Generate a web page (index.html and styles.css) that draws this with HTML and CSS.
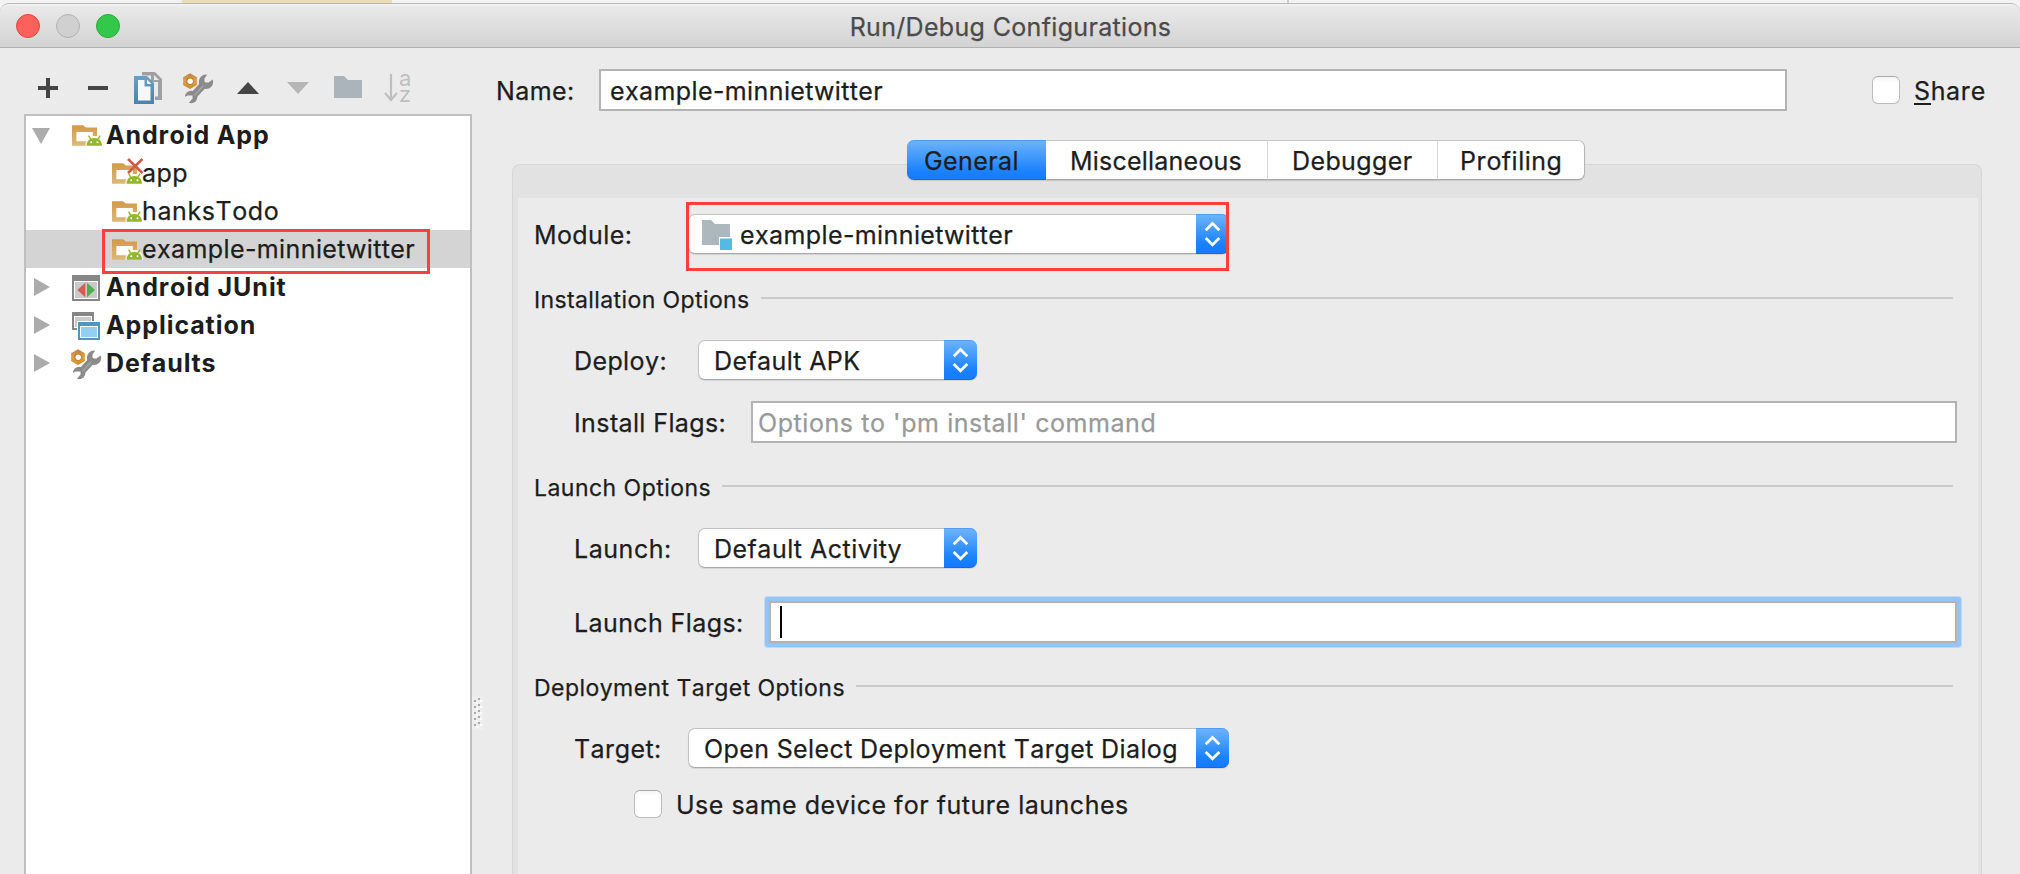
FILE: index.html
```html
<!DOCTYPE html>
<html lang="en">
<head>
<meta charset="utf-8">
<title>Run/Debug Configurations</title>
<link rel="stylesheet" href="styles.css">
</head>
<body>
<svg class="defs" width="0" height="0">
  <defs>
    <linearGradient id="tan" x1="0" y1="0" x2="0" y2="1"><stop offset="0" stop-color="#d39a49"/><stop offset="1" stop-color="#dcb877"/></linearGradient>
    <linearGradient id="steel" x1="0" y1="0" x2="0" y2="1"><stop offset="0" stop-color="#6ba0c0"/><stop offset="1" stop-color="#4a83aa"/></linearGradient>
    <linearGradient id="nut" x1="0" y1="0" x2="0" y2="1"><stop offset="0" stop-color="#c08040"/><stop offset=".5" stop-color="#e2a046"/><stop offset="1" stop-color="#cf8a25"/></linearGradient>
    <mask id="jaws" maskUnits="userSpaceOnUse" x="0" y="0" width="31" height="31">
      <rect width="31" height="31" fill="#fff"/>
      <path d="M21.500 8.500V5.500L26.500-2L33 4L25.500 9.500H22.500z" fill="#000"/>
      <path d="M9.500 22.500V25.500L4 32L-2 26L4.500 22.500z" fill="#000"/>
    </mask>
    <symbol id="android-folder" viewBox="0 0 33 38">
      <path d="M5 14H24V27H5z" fill="#fff"/>
      <path d="M2 9.300H13L16 11.500H27V20H22.800V16H6.400V25.200H17.500V29.700H2z" fill="url(#tan)"/>
      <path d="M15.300 30C15.300 24 17.500 20 24.500 20S33 24 33 30z" fill="#fff" opacity=".75"/>
      <path d="M16.700 29.800C16.700 24.800 19.800 22 24.350 22S32 24.800 32 29.800zM18 20l1.200-.7 2 3.300-1.200.8zM30.700 20l-1.200-.7-2 3.300 1.200.8z" fill="#94b72b"/>
      <circle cx="21.200" cy="26.300" r="1" fill="#fff"/><circle cx="27.500" cy="26.300" r="1" fill="#fff"/>
    </symbol>
    <symbol id="wrench" viewBox="0 0 31 31">
      <path d="M7 .3L13.900 4.200V12L7 15.900L.1 12V4.200z" fill="url(#nut)"/>
      <circle cx="7" cy="8" r="3.700" fill="#c17a28"/><circle cx="7.200" cy="8.200" r="2.700" fill="#fff"/>
      <g mask="url(#jaws)" fill="#8b8b8b"><circle cx="23" cy="8.800" r="7.200"/><circle cx="8.200" cy="24" r="6.200"/><path d="M17.500 9.500L23 14.500L13 25L7.500 20.500z"/></g>
      <path d="M11.300 22.500L20.500 12.500" stroke="#a5a5a5" stroke-width="1.300"/>
    </symbol>
    <symbol id="updown" viewBox="0 0 33 40"><path d="M9.700 16.300L16.500 9.500L23.300 16.300M9.700 24L16.500 30.800L23.300 24" fill="none" stroke="#fff" stroke-width="2.700"/></symbol>
  </defs>
</svg>

<div class="backdrop"><span class="backdrop-tab"></span><span class="backdrop-line"></span></div>
<div class="window">
  <header class="titlebar">
    <div class="lights"><i class="light red"></i><i class="light gray"></i><i class="light green"></i></div>
    <h1 class="title">Run/Debug Configurations</h1>
  </header>

  <div class="dialog">
    <aside class="sidebar">
      <div class="toolbar">
        <svg class="tool" viewBox="0 0 50 52"><path d="M15 24h8v-8h4v8h8v4h-8v8h-4v-8h-8z" fill="#454545"/></svg>
        <svg class="tool" viewBox="0 0 50 52"><path d="M15 24h20v4h-20z" fill="#454545"/></svg>
        <svg class="tool" viewBox="0 0 50 52">
          <path d="M19 10H32L39 17V38H32V34.500H35V20H28V13.500H19z" fill="#a0a0a0"/><path d="M31 13v5h5z" fill="#ebebeb"/>
          <path d="M11 14H24L31 21V42H11z" fill="url(#steel)"/><path d="M15 18H21.500V24.500H27.500V38.500H15z" fill="#f7f7f7"/><path d="M24 17.500V22H28.500z" fill="#f2f2f2"/>
        </svg>
        <svg class="tool" viewBox="0 0 50 52"><use href="#wrench" x="10" y="11" width="31" height="31"/></svg>
        <svg class="tool" viewBox="0 0 50 52"><path d="M14 32L25 20L36 32z" fill="#454545"/></svg>
        <svg class="tool" viewBox="0 0 50 52"><path d="M14 20H36L25 32z" fill="#b6b6b6"/></svg>
        <svg class="tool" viewBox="0 0 50 52"><path d="M11 14H21L25 18H39V36H11z" fill="#aab4ba"/></svg>
        <svg class="tool" viewBox="0 0 50 52"><path d="M18 12V38M12 31L18 38L24 31" fill="none" stroke="#bfbfbf" stroke-width="2.200"/><text class="sort-letter" x="26" y="24">a</text><text class="sort-letter" x="26" y="40">z</text></svg>
      </div>
      <ul class="tree">
        <li class="row group"><svg class="toggle" viewBox="0 0 44 38"><path d="M6 12H24L15 28z" fill="#acacac"/></svg><svg class="icon" viewBox="0 0 37 38"><use href="#android-folder" width="33" height="38"/></svg><span class="bold app-group">Android App</span></li>
        <li class="row leaf"><svg class="icon small" viewBox="0 0 33 38"><use href="#android-folder" width="33" height="38"/><path d="M18 5L32.500 19M32.500 5L18 19" stroke="#d25a4c" stroke-width="2.600"/></svg><span>app</span></li>
        <li class="row leaf"><svg class="icon small" viewBox="0 0 33 38"><use href="#android-folder" width="33" height="38"/></svg><span class="hanks">hanksTodo</span></li>
        <li class="row leaf selected"><svg class="icon small" viewBox="0 0 33 38"><use href="#android-folder" width="33" height="38"/></svg><span>example-minnietwitter</span><i class="mark tree-mark"></i></li>
        <li class="row group"><svg class="toggle" viewBox="0 0 44 38"><path d="M8 10L24 19L8 28z" fill="#acacac"/></svg><svg class="icon" viewBox="0 0 37 38"><path d="M2 7H30V33H2z" fill="#868686"/><path d="M4 13H28V31H4z" fill="#fff"/><path d="M5 14H27V30H5z" fill="#cacaca"/><path d="M7.300 22L15.300 14.700V29.300z" fill="#d3604f"/><path d="M25 22L17 14.700V29.300z" fill="#4cae51"/></svg><span class="bold">Android JUnit</span></li>
        <li class="row group"><svg class="toggle" viewBox="0 0 44 38"><path d="M8 10L24 19L8 28z" fill="#acacac"/></svg><svg class="icon" viewBox="0 0 37 38"><path d="M2 6H24V24H2z" fill="#868686"/><path d="M4 10H22V22H4z" fill="#fff"/><path d="M5 11H21V21H5z" fill="#cbcbcb"/><path d="M7 15H31V24H7z" fill="#fff"/><path d="M8 16H30V34H8z" fill="#5296bc"/><path d="M10 20H28V32H10z" fill="#fff"/><path d="M11 21H27V31H11z" fill="#92cff3"/></svg><span class="bold">Application</span></li>
        <li class="row group"><svg class="toggle" viewBox="0 0 44 38"><path d="M8 10L24 19L8 28z" fill="#acacac"/></svg><svg class="icon" viewBox="0 0 37 38"><use href="#wrench" x="1" y="5" width="31" height="31"/></svg><span class="bold">Defaults</span></li>
      </ul>
    </aside>

    <div class="splitter"><svg class="grip" viewBox="0 0 12 34">
      <path d="M0 0H12V34H0z" fill="#eee"/>
      <path d="M2 4h2v2h-2zM6 2h2v2h-2zM2 10h2v2h-2zM6 8h2v2h-2zM2 16h2v2h-2zM6 14h2v2h-2zM2 22h2v2h-2zM6 20h2v2h-2zM2 28h2v2h-2zM6 26h2v2h-2z" fill="#ababab"/>
      <path d="M4 6h2v2h-2zM8 4h2v2h-2zM4 12h2v2h-2zM8 10h2v2h-2zM4 18h2v2h-2zM8 16h2v2h-2zM4 24h2v2h-2zM8 22h2v2h-2zM4 30h2v2h-2zM8 28h2v2h-2z" fill="#fff"/>
    </svg></div>

    <main class="main">
      <div class="name-row">
        <span class="label name-label">Name:</span>
        <div class="field name-field"><span class="label">example-minnietwitter</span></div>
        <div class="check"></div>
        <span class="label share"><span class="mnemonic">S</span>hare</span>
      </div>

      <div class="panel">
        <nav class="tabs">
          <div class="tab active general"><span class="label">General</span></div>
          <div class="tab misc"><span class="label">Miscellaneous</span></div>
          <div class="tab debugger"><span class="label">Debugger</span></div>
          <div class="tab profiling"><span class="label">Profiling</span></div>
        </nav>
        <section class="content">
          <div class="form-row module">
            <span class="label module-label">Module:</span>
            <div class="select wide"><svg class="module-icon" viewBox="0 0 32 32"><path d="M1 2H10L14 6H29V19H18V27H1z" fill="#adb7be"/><path d="M19 20.500H31V32H19z" fill="#53bbe3"/></svg><span class="label">example-minnietwitter</span><span class="stepper"><svg viewBox="0 0 33 40"><use href="#updown"/></svg></span><i class="mark module-mark"></i></div>
          </div>
          <div class="heading"><span class="heading-text">Installation Options</span><i class="rule"></i></div>
          <div class="form-row indent">
            <span class="label short-label">Deploy:</span>
            <div class="select narrow"><span class="label">Default APK</span><span class="stepper"><svg viewBox="0 0 33 40"><use href="#updown"/></svg></span></div>
          </div>
          <div class="form-row indent install">
            <span class="label install-label">Install Flags:</span>
            <div class="field flags"><span class="label hint">Options to 'pm install' command</span></div>
          </div>
          <div class="heading"><span class="heading-text launch-head">Launch Options</span><i class="rule"></i></div>
          <div class="form-row indent">
            <span class="label short-label launch">Launch:</span>
            <div class="select narrow"><span class="label activity">Default Activity</span><span class="stepper"><svg viewBox="0 0 33 40"><use href="#updown"/></svg></span></div>
          </div>
          <div class="form-row indent launch-flags">
            <span class="label launch-label">Launch Flags:</span>
            <div class="field flags focused"><i class="caret"></i></div>
          </div>
          <div class="heading"><span class="heading-text deploy-head">Deployment Target Options</span><i class="rule"></i></div>
          <div class="form-row indent">
            <span class="label target-label">Target:</span>
            <div class="select wide target"><span class="label">Open Select Deployment Target Dialog</span><span class="stepper"><svg viewBox="0 0 33 40"><use href="#updown"/></svg></span></div>
          </div>
          <div class="form-row same-device">
            <div class="check"></div>
            <span class="label">Use same device for future launches</span>
          </div>
        </section>
      </div>
    </main>
  </div>
</div>
</body>
</html>
```
FILE: styles.css
```css
* { box-sizing: border-box; }
body {
  margin: 0;
  width: 2020px;
  height: 874px;
  overflow: hidden;
  display: flex;
  flex-direction: column;
  background: #f3f3f3;
  color: #1d1d1d;
  font: 400 25px/30px Inter, Roboto, sans-serif;
  letter-spacing: .4px;
  font-kerning: none;
  -webkit-text-stroke: .25px;
  white-space: nowrap;
}
.defs { position: absolute; }
svg { display: block; flex: none; }

.backdrop { height: 3px; flex: none; display: flex; padding-left: 182px; }
.backdrop-tab { width: 210px; background: #eadfb3; }
.backdrop-line { width: 2px; margin-left: 895px; background: #cfcfcf; }

.window {
  flex: 1;
  min-height: 0;
  display: flex;
  flex-direction: column;
  background: #ebebeb;
  border-radius: 9px 9px 0 0;
}
.titlebar {
  height: 45px;
  flex: none;
  display: grid;
  grid-template-columns: 1fr auto 1fr;
  align-items: center;
  border-top: 1px solid #b9b9b9;
  border-bottom: 1px solid #b0b0b0;
  border-radius: 9px 9px 0 0;
  background: linear-gradient(#f4f4f4, #e9e9e9 3px, #d3d3d3);
}
.title { margin: 0; padding: 2px 0 0 1px; font: inherit; letter-spacing: .33px; color: #4b4b4b; }
.lights { display: flex; gap: 16px; padding-left: 16px; padding-top: 1px; }
.light { width: 24px; height: 24px; border-radius: 50%; }
.red { background: #fd615c; border: 1px solid #e2443f; }
.gray { background: #d0d0d0; border: 1px solid #b2b2b2; }
.green { background: #34c84a; border: 1px solid #27ab35; }

.dialog { flex: 1; min-height: 0; display: flex; }
.sidebar { width: 472px; flex: none; padding-left: 24px; display: flex; flex-direction: column; }
.toolbar { height: 66px; flex: none; padding-top: 14px; margin-left: -1px; display: flex; }
.tool { width: 50px; height: 52px; }
.sort-letter { font: 400 22px Inter, sans-serif; fill: #bfbfbf; letter-spacing: 0; }
.tree {
  flex: 1;
  margin: 0;
  padding: 0;
  list-style: none;
  background: #fff;
  border: 2px solid #bfbfbf;
  border-bottom: 0;
}
.row { height: 38px; display: flex; align-items: center; position: relative; }
.leaf { padding-left: 84px; }
.selected { background: #d4d4d4; }
.toggle { width: 44px; height: 38px; }
.icon { width: 36px; height: 38px; }
.group .icon { width: 37px; margin-right: -1px; }
.small { width: 33px; margin-right: -1px; }
.bold { font-weight: 700; letter-spacing: .95px; -webkit-text-stroke: 0; }
.app-group { letter-spacing: .85px; }
.hanks { letter-spacing: .6px; }
.mark { position: absolute; border: 3px solid #fc403d; z-index: 2; }
.tree-mark { left: 76px; top: -1px; width: 328px; height: 45px; }

.splitter { width: 23px; flex: none; padding-top: 648px; }
.grip { width: 12px; height: 34px; }

.main { flex: 1; min-width: 0; display: flex; flex-direction: column; padding-top: 21px; }
.label { padding-top: 2px; }
.name-row { height: 42px; flex: none; display: flex; align-items: center; }
.name-label { width: 104px; padding-left: 1px; }
.field { height: 42px; border: 2px solid #b3b3b3; background: #fff; display: flex; align-items: center; }
.name-field { width: 1188px; padding-left: 9px; margin-right: 85px; }
.check {
  width: 28px;
  height: 28px;
  flex: none;
  border: 1px solid #bcbcbc;
  border-top-color: #a9a9a9;
  border-radius: 6px;
  background: linear-gradient(#f4f4f4, #fff 5px);
}
.share { margin-left: 14px; letter-spacing: .6px; }
.mnemonic { display: inline-block; height: 29px; border-bottom: 2px solid #1d1d1d; line-height: 30px; }

.panel {
  flex: 1;
  margin: 53px 38px 0 17px;
  border: 1px solid #d6d6d6;
  border-bottom: 0;
  border-radius: 8px 8px 0 0;
  padding: 0 3px 0 5px;
  background: #e2e2e2;
  display: flex;
  flex-direction: column;
}
.tabs { height: 40px; flex: none; margin: -25px 0 18px 389px; display: flex; }
.tab { background: #fff; border-top: 1px solid #c6c6c6; border-bottom: 1px solid #a8a8a8; border-right: 1px solid #dcdcdc; display: flex; align-items: center; box-shadow: 0 1px 1px rgba(0,0,0,.12); }
.tab.active { border-color: #4c9dfa #fff #1266f0 #3d8df5; background: linear-gradient(#6cb3fa, #1a82ff 80%, #147bff); border-radius: 7px 0 0 7px; }
.general { width: 140px; padding-left: 17px; }
.misc { width: 221px; padding-left: 23px; letter-spacing: .22px; }
.debugger { width: 170px; padding-left: 24px; }
.profiling { width: 147px; padding-left: 22px; letter-spacing: .5px; border-right-color: #b5b5b5; border-radius: 0 7px 7px 0; }

.content { flex: 1; background: #ebebeb; padding: 16px 21px 0 16px; }
.form-row { height: 40px; display: flex; align-items: center; }
.indent { padding-left: 40px; }
.heading { height: 30px; margin: 30px 4px 26px 0; display: flex; align-items: center; gap: 11px; font-size: 23px; }
.heading-text { padding-top: 2px; }
.rule { flex: 1; height: 2px; margin-bottom: 2px; background: #cbcbcb; }
.select {
  height: 40px;
  position: relative;
  display: flex;
  align-items: center;
  border: 1px solid #c3c3c3;
  border-bottom-color: #a9a9a9;
  border-radius: 7px;
  background: #fff;
  box-shadow: 0 1px 1px rgba(0,0,0,.1);
}
.select .label { flex: 1; }
.stepper {
  width: 33px;
  height: 40px;
  margin: -1px;
  flex: none;
  border-radius: 0 7px 7px 0;
  border-top: 1px solid #4c9dfa;
  border-bottom: 1px solid #1266f0;
  background: linear-gradient(#6cb3fa, #1a82ff 75%, #147bff);
}
.stepper svg { width: 33px; height: 40px; margin-top: -1px; }
.wide { width: 541px; padding-left: 12px; }
.narrow { width: 279px; padding-left: 15px; }
.module-label { width: 154px; }
.module-icon { width: 32px; height: 32px; margin-right: 7px; }
.module-mark { left: -3px; top: -13px; width: 543px; height: 69px; }
.short-label { width: 124px; }
.launch { letter-spacing: .55px; }
.activity { letter-spacing: .5px; }
.install { height: 42px; margin-top: 21px; }
.install-label { width: 177px; }
.flags { flex: 1; padding-left: 5px; }
.hint { color: #999; letter-spacing: .57px; }
.install + .heading, .launch-flags + .heading { margin-top: 29px; }
.launch-head { letter-spacing: .47px; }
.deploy-head { letter-spacing: .45px; }
.launch-flags { height: 42px; margin-top: 33px; }
.launch-label { width: 195px; }
.focused { box-shadow: 0 0 0 4px #96c4f5, 0 0 0 5px #c0daf5; border-radius: 1px; padding-left: 9px; }
.caret { width: 2px; height: 32px; background: #000; }
.target-label { width: 114px; }
.target { padding-left: 15px; }
.target .label { letter-spacing: .38px; }
.same-device { height: 28px; margin-top: 22px; padding-left: 100px; letter-spacing: .5px; }
.same-device .label { margin-left: 14px; }
```
